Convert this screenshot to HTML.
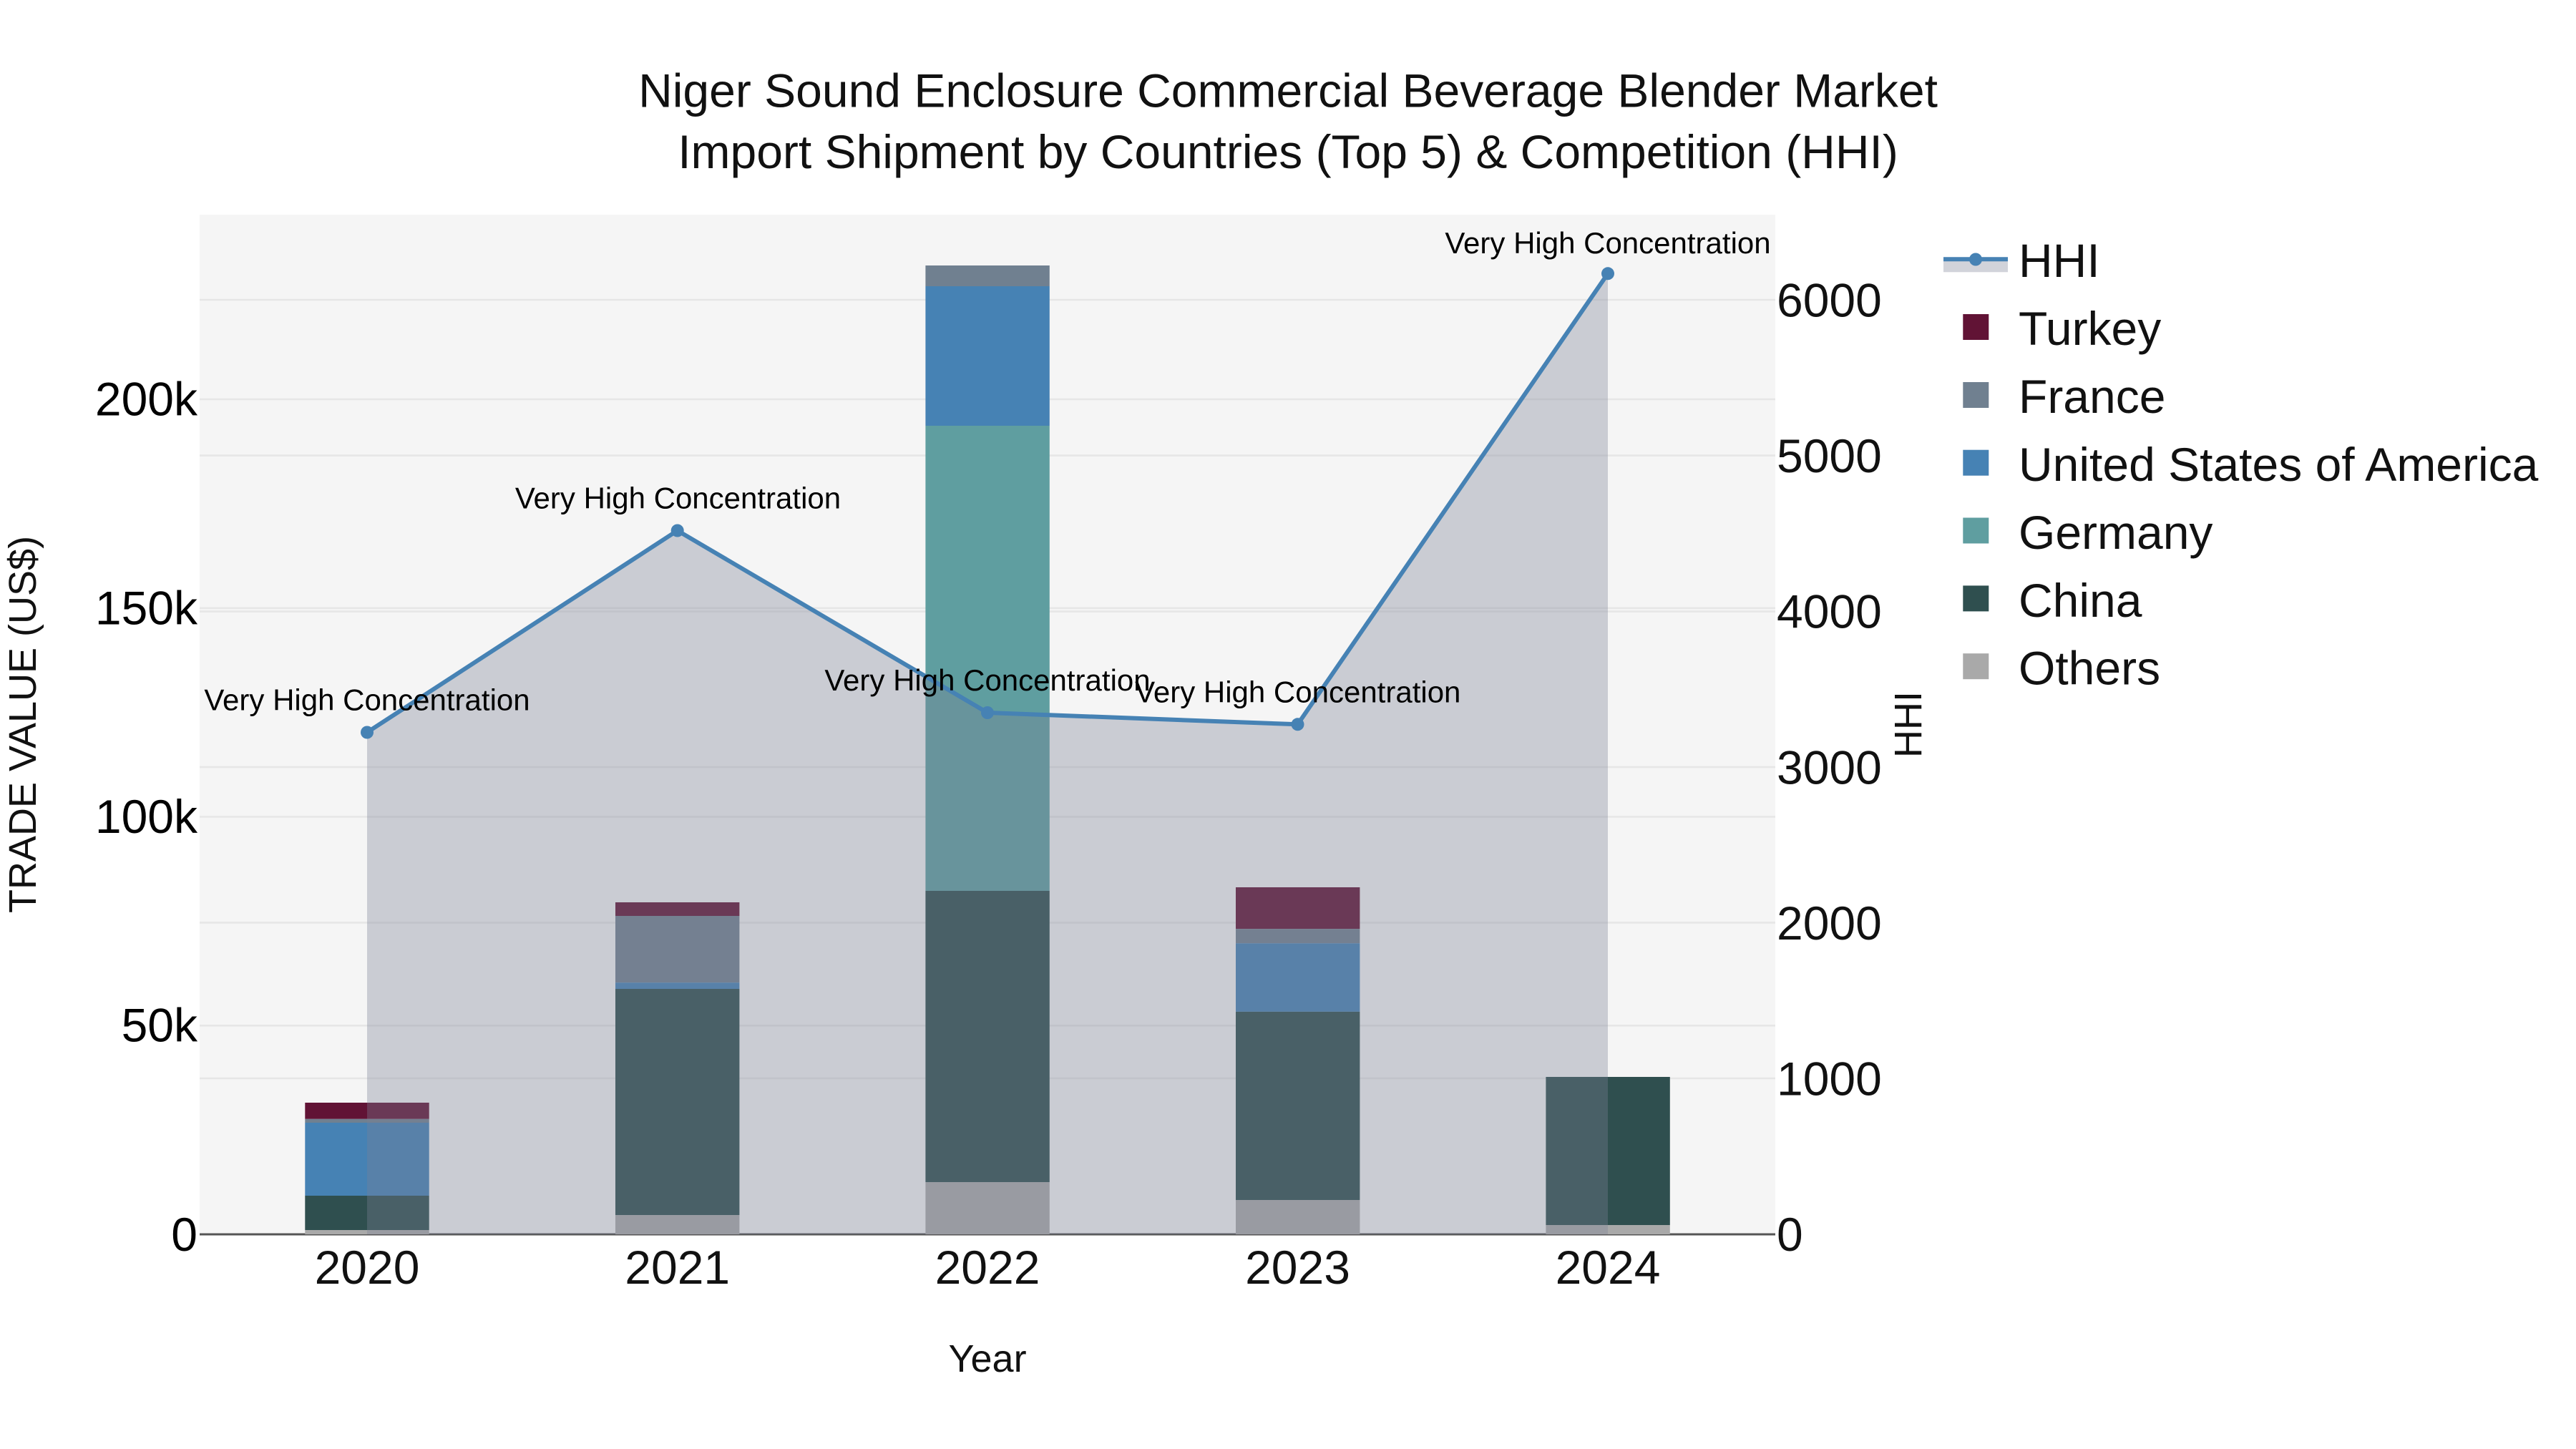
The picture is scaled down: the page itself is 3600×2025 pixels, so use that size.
<!DOCTYPE html>
<html><head><meta charset="utf-8"><title>Niger Sound Enclosure Commercial Beverage Blender Market</title>
<style>
html,body{margin:0;padding:0;background:#fff;width:3600px;height:2025px;overflow:hidden}
svg{display:block}
text{font-family:"Liberation Sans",Arial,sans-serif;white-space:pre}
.t{font-size:66px;fill:#111}
.k{font-size:66px;fill:#000}
.a{font-size:42px;fill:#000;text-anchor:middle}
.x{font-size:66px;fill:#111;text-anchor:middle}
.l{font-size:66px;fill:#111}
.g{stroke:#e6e6e6;stroke-width:2.6;fill:none}
</style></head><body>
<svg width="3600" height="2025" viewBox="0 0 3600 2025" xmlns="http://www.w3.org/2000/svg">
<rect width="3600" height="2025" fill="#fff"/>
<rect x="279" y="300" width="2202" height="1425" fill="#f5f5f5"/>
<!-- grid -->
<path class="g" d="M279 558H2481M279 849.8H2481M279 1141.5H2481M279 1433.3H2481M279 419H2481M279 636.6H2481M279 854.6H2481M279 1072H2481M279 1289.4H2481M279 1507H2481"/>
<path d="M279 1725H2481" stroke="#555" stroke-width="3" fill="none"/>
<!-- bars 2020 -->
<rect x="426.3" y="1541" width="173.4" height="22.8" fill="#611335"/>
<rect x="426.3" y="1563.8" width="173.4" height="5.2" fill="#708090"/>
<rect x="426.3" y="1569" width="173.4" height="102" fill="#4682b4"/>
<rect x="426.3" y="1671" width="173.4" height="48" fill="#2f4f4f"/>
<rect x="426.3" y="1719" width="173.4" height="6" fill="#a9a9a9"/>
<!-- 2021 -->
<rect x="860" y="1261" width="173.4" height="19" fill="#611335"/>
<rect x="860" y="1280" width="173.4" height="93.2" fill="#708090"/>
<rect x="860" y="1373.2" width="173.4" height="8.8" fill="#4682b4"/>
<rect x="860" y="1382" width="173.4" height="316.2" fill="#2f4f4f"/>
<rect x="860" y="1698.2" width="173.4" height="26.8" fill="#a9a9a9"/>
<!-- 2022 -->
<rect x="1293.4" y="371" width="173.4" height="29" fill="#708090"/>
<rect x="1293.4" y="400" width="173.4" height="195" fill="#4682b4"/>
<rect x="1293.4" y="595" width="173.4" height="650" fill="#5f9ea0"/>
<rect x="1293.4" y="1245" width="173.4" height="407" fill="#2f4f4f"/>
<rect x="1293.4" y="1652" width="173.4" height="73" fill="#a9a9a9"/>
<!-- 2023 -->
<rect x="1727" y="1240" width="173.4" height="58.2" fill="#611335"/>
<rect x="1727" y="1298.2" width="173.4" height="20.1" fill="#708090"/>
<rect x="1727" y="1318.3" width="173.4" height="95.6" fill="#4682b4"/>
<rect x="1727" y="1413.9" width="173.4" height="263.1" fill="#2f4f4f"/>
<rect x="1727" y="1677" width="173.4" height="48" fill="#a9a9a9"/>
<!-- 2024 -->
<rect x="2160.4" y="1505" width="173.4" height="207.2" fill="#2f4f4f"/>
<rect x="2160.4" y="1712.2" width="173.4" height="12.8" fill="#a9a9a9"/>
<!-- HHI area + line -->
<path d="M513 1023.5L946.7 741.5L1380 996L1813.5 1012.3L2247 382.3V1725H513Z" fill="#7a8294" fill-opacity="0.35"/>
<path d="M513 1023.5L946.7 741.5L1380 996L1813.5 1012.3L2247 382.3" fill="none" stroke="#4682b4" stroke-width="6" stroke-linejoin="round"/>
<g fill="#4682b4">
<circle cx="513" cy="1023.5" r="9"/><circle cx="946.7" cy="741.5" r="9"/><circle cx="1380" cy="996" r="9"/><circle cx="1813.5" cy="1012.3" r="9"/><circle cx="2247" cy="382.3" r="9"/>
</g>
<!-- annotations -->
<text class="a" x="513" y="992.5">Very High Concentration</text>
<text class="a" x="947.5" y="710.5">Very High Concentration</text>
<text class="a" x="1380" y="965">Very High Concentration</text>
<text class="a" x="1813.8" y="981.3">Very High Concentration</text>
<text class="a" x="2247" y="354">Very High Concentration</text>
<!-- title -->
<text class="t" x="1800" y="149.5" text-anchor="middle">Niger Sound Enclosure Commercial Beverage Blender Market</text>
<text class="t" x="1800" y="235" text-anchor="middle">Import Shipment by Countries (Top 5) &amp; Competition (HHI)</text>
<!-- left ticks -->
<g text-anchor="end">
<text class="k" x="276" y="580.5">200k</text>
<text class="k" x="276" y="872.5">150k</text>
<text class="k" x="276" y="1164">100k</text>
<text class="k" x="276" y="1455.5">50k</text>
<text class="k" x="276" y="1748">0</text>
</g>
<!-- right ticks -->
<text class="t" x="2483" y="442.5">6000</text>
<text class="t" x="2483" y="660">5000</text>
<text class="t" x="2483" y="877.5">4000</text>
<text class="t" x="2483" y="1095.5">3000</text>
<text class="t" x="2483" y="1313">2000</text>
<text class="t" x="2483" y="1530.5">1000</text>
<text class="t" x="2483" y="1748">0</text>
<!-- x ticks -->
<text class="x" x="513" y="1794">2020</text>
<text class="x" x="946.7" y="1794">2021</text>
<text class="x" x="1380" y="1794">2022</text>
<text class="x" x="1813.5" y="1794">2023</text>
<text class="x" x="2247" y="1794">2024</text>
<!-- axis titles -->
<text x="1380" y="1917" text-anchor="middle" font-size="54" fill="#111">Year</text>
<text transform="translate(50,1012.5) rotate(-90)" text-anchor="middle" font-size="54" fill="#111">TRADE VALUE (US$)</text>
<text transform="translate(2685,1012.5) rotate(-90)" text-anchor="middle" font-size="54" fill="#111">HHI</text>
<!-- legend -->
<rect x="2716" y="362" width="90" height="18.3" fill="#7a8294" fill-opacity="0.35"/>
<path d="M2716 362.3H2806" stroke="#4682b4" stroke-width="6"/>
<circle cx="2761" cy="362.5" r="9" fill="#4682b4"/>
<rect x="2743.3" y="439" width="36" height="36" fill="#611335"/>
<rect x="2743.3" y="534" width="36" height="36" fill="#708090"/>
<rect x="2743.3" y="628.7" width="36" height="36" fill="#4682b4"/>
<rect x="2743.3" y="723.5" width="36" height="36" fill="#5f9ea0"/>
<rect x="2743.3" y="818.4" width="36" height="36" fill="#2f4f4f"/>
<rect x="2743.3" y="913.2" width="36" height="36" fill="#a9a9a9"/>
<text class="l" x="2821" y="387">HHI</text>
<text class="l" x="2821" y="482">Turkey</text>
<text class="l" x="2821" y="577">France</text>
<text class="l" x="2821" y="672">United States of America</text>
<text class="l" x="2821" y="766.9">Germany</text>
<text class="l" x="2821" y="861.8">China</text>
<text class="l" x="2821" y="956.7">Others</text>
</svg>
</body></html>
